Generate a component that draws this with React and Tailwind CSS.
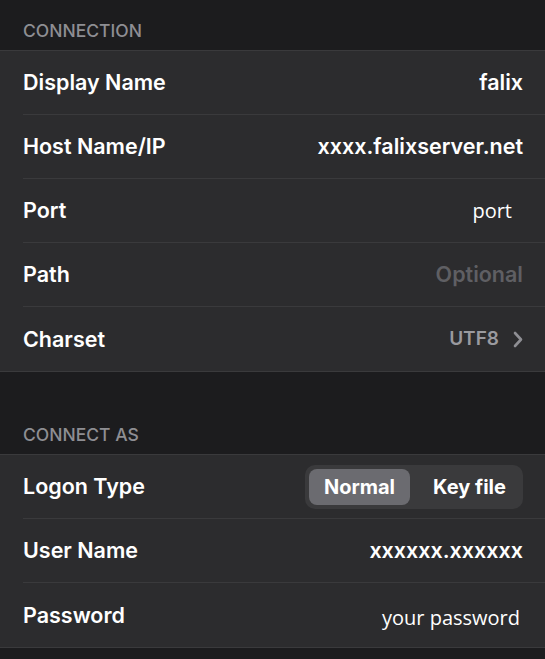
import React from "react";

function Row({ label, children, last }) {
  return (
    <div className="pl-[23px]">
      <div className={`h-16 flex items-center justify-between pr-[22px] ${last ? "" : "border-b border-[#3a3a3c]"}`}>
        <span className="text-[21.5px] font-semibold text-white">{label}</span>
        {children}
      </div>
    </div>
  );
}

function Header({ children }) {
  return (
    <div className="px-[23px] text-[17.5px] leading-6 font-medium uppercase text-[#8e8e93]">{children}</div>
  );
}

export default function App() {
  const val = "text-[21.5px] font-semibold text-white";
  return (
    <div className="w-[545px] h-[659px] bg-[#1c1c1e] overflow-hidden font-['Inter','Noto_Sans',sans-serif]">
      <div className="pt-[19px] pb-[7px]"><Header>Connection</Header></div>
      <div className="bg-[#2c2c2e] border-y border-[#3a3a3c]">
        <Row label="Display Name"><span className={val}>falix</span></Row>
        <Row label="Host Name/IP"><span className={val}>xxxx.falixserver.net</span></Row>
        <Row label="Port"><span className="text-[20px] text-white pr-[11px] font-['Open_Sans',sans-serif]">port</span></Row>
        <Row label="Path"><span className="text-[21.5px] font-semibold text-[#5f5f63]">Optional</span></Row>
        <Row label="Charset" last>
          <span className="flex items-center gap-[14px]">
            <span className="text-[19px] font-semibold text-[#9a9a9f]">UTF8</span>
            <svg width="10" height="17" viewBox="0 0 10 17" fill="none">
              <path d="M2 2l6 6.5-6 6.5" stroke="#8e8e93" strokeWidth="2.6" strokeLinecap="round" strokeLinejoin="round" />
            </svg>
          </span>
        </Row>
      </div>
      <div className="pt-[51px] pb-[7px]"><Header>Connect as</Header></div>
      <div className="bg-[#2c2c2e] border-y border-[#3a3a3c]">
        <Row label="Logon Type">
          <div className="flex items-center w-[218px] h-[44px] rounded-[10px] bg-[#3a3a3c] p-1">
            <div className="w-[101px] h-full rounded-[8px] bg-[#6b6b70] flex items-center justify-center text-[20px] font-bold text-white">Normal</div>
            <div className="flex-1 h-full flex items-center justify-center pl-[10px] text-[20px] font-bold text-white">Key file</div>
          </div>
        </Row>
        <Row label="User Name"><span className={val}>xxxxxx.xxxxxx</span></Row>
        <Row label="Password" last><span className="text-[20px] text-white pr-[3px] pt-[6px] font-['Open_Sans',sans-serif]">your password</span></Row>
      </div>
    </div>
  );
}
